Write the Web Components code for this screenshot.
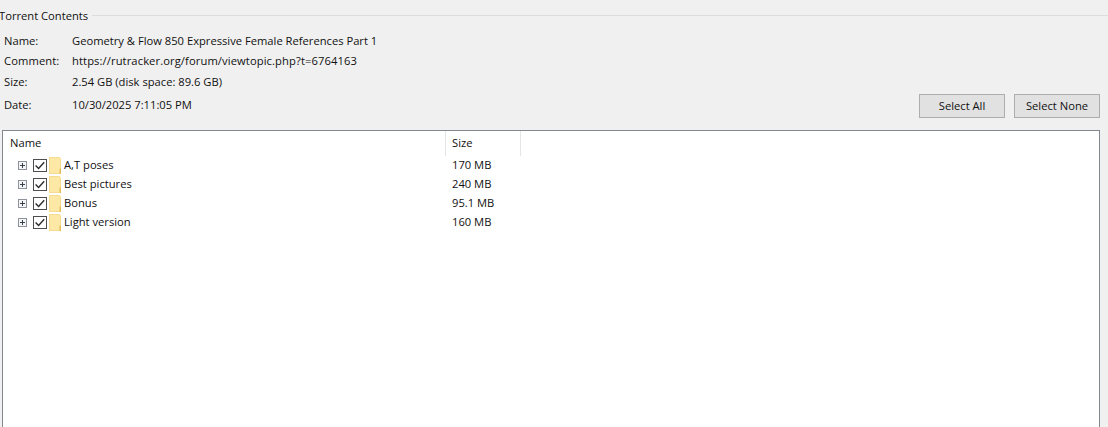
<!DOCTYPE html>
<html>
<head>
<meta charset="utf-8">
<title>Torrent Contents</title>
<style>
  html, body { margin: 0; height: 100%; overflow: hidden; background: #f0f0f0; }
  body { font: 12px "Open Sans", "Noto Sans", sans-serif; color: #111; }
</style>
</head>
<body>
<torrent-panel>
  <info-row slot="info" label="Name:" h="20">Geometry &amp; Flow 850 Expressive Female References Part 1</info-row>
  <info-row slot="info" label="Comment:" h="20" style="letter-spacing:.1px">https://rutracker.org/forum/viewtopic.php?t=6764163</info-row>
  <info-row slot="info" label="Size:" h="22">2.54 GB (disk space: 89.6 GB)</info-row>
  <info-row slot="info" label="Date:" h="25">10/30/2025 7:11:05 PM</info-row>
  <push-button slot="actions">Select All</push-button>
  <push-button slot="actions">Select None</push-button>
  <file-tree slot="tree">
    <file-row size="170 MB">A,T poses</file-row>
    <file-row size="240 MB">Best pictures</file-row>
    <file-row size="95.1 MB">Bonus</file-row>
    <file-row size="160 MB">Light version</file-row>
  </file-tree>
</torrent-panel>

<script>
"use strict";

const fontStack = '"Open Sans", "Noto Sans", sans-serif';

class TorrentPanel extends HTMLElement {
  constructor() {
    super();
    this.attachShadow({ mode: "open" }).innerHTML = `
      <style>
      :host { display: flex; flex-direction: column; height: 427px; box-sizing: border-box; overflow: hidden; font: 11.2px ${fontStack}; }
      .group { display: flex; align-items: center; gap: 4px; height: 30px; margin-left: -1px; }
      .group i { flex: 1; height: 1px; background: #dcdcdc; }
      .head { display: flex; align-items: flex-end; padding: 1px 8px 12px 4px; height: 100px; box-sizing: border-box; flex: none; }
      .info { flex: 1; display: flex; flex-direction: column; }
      .actions { display: flex; gap: 9px; }
      .tree { flex: 1; display: flex; margin: 0 8px 0 2px; min-height: 0; }
      </style>
      <div class="group"><span>Torrent Contents</span><i></i></div>
      <div class="head">
        <div class="info"><slot name="info"></slot></div>
        <div class="actions"><slot name="actions"></slot></div>
      </div>
      <div class="tree"><slot name="tree"></slot></div>`;
  }
}

class InfoRow extends HTMLElement {
  constructor() {
    super();
    this.attachShadow({ mode: "open" }).innerHTML = `
      <style>
      :host { display: flex; align-items: center; padding-bottom: 2px; box-sizing: border-box; }
      .label { width: 68px; }
      </style>
      <span class="label"></span><span><slot></slot></span>`;
  }
  connectedCallback() {
    this.shadowRoot.querySelector(".label").textContent = this.getAttribute("label");
    this.style.height = this.getAttribute("h") + "px";
  }
}

class PushButton extends HTMLElement {
  constructor() {
    super();
    this.attachShadow({ mode: "open" }).innerHTML = `
      <style>
      :host { display: flex; align-items: center; justify-content: center; width: 86px; height: 24px; box-sizing: border-box;
        background: #e1e1e1; border: 1px solid #adadad; padding-bottom: 2px; }
      </style>
      <slot></slot>`;
  }
}

class FileTree extends HTMLElement {
  constructor() {
    super();
    this.attachShadow({ mode: "open" }).innerHTML = `
      <style>
      :host { display: block; flex: 1; box-sizing: border-box; background: #fff; border: 1px solid #828790; border-bottom: 0; }
      .header { display: flex; height: 25px; }
      .header div { box-sizing: border-box; display: flex; align-items: center; padding: 0 0 2px 7px; border-right: 1px solid #e5e5e5; }
      .name { width: 443px; }
      .header .size { width: 75px; padding-left: 6px; }
      .rows { display: flex; flex-direction: column; }
      </style>
      <div class="header"><div class="name">Name</div><div class="size">Size</div></div>
      <div class="rows"><slot></slot></div>`;
  }
}

class FileRow extends HTMLElement {
  constructor() {
    super();
    this.attachShadow({ mode: "open" }).innerHTML = `
      <style>
      :host { display: flex; align-items: center; height: 19px; }
      .name { width: 443px; display: flex; align-items: center; box-sizing: border-box; padding-left: 15px; }
      .size { padding: 0 0 2px 6px; }
      .label { padding-bottom: 2px; }
      svg { display: block; flex: none; }
      .check { margin-left: 6px; }
      .folder { margin-left: 2px; margin-right: 2px; }
      </style>
      <div class="name">
        <svg width="9" height="9" viewBox="0 0 9 9" shape-rendering="crispEdges">
          <rect x=".5" y=".5" width="8" height="8" fill="#f4f5f7" stroke="#8d929c"/>
          <path d="M2 4.5h5M4.5 2v5" stroke="#3a3f4a" fill="none"/>
        </svg>
        <svg class="check" width="14" height="13" viewBox="0 0 14 13">
          <rect x=".5" y=".5" width="13" height="12" fill="#fff" stroke="#4d4d4d" shape-rendering="crispEdges"/>
          <path d="M2.6 6.4 5.6 9.4 11.2 3.2" fill="none" stroke="#2c2c2c" stroke-width="1.4"/>
        </svg>
        <svg class="folder" width="13" height="17" viewBox="0 0 13 17">
          <path d="M0 0h10.5l1.5 2v15H0z" fill="#fde8a6"/>
          <path d="M.5 .5h9.8l1.2 1.7V16.500H.5z" fill="none" stroke="#f6dc91"/>
          <path d="M12 11v6h-1.500v-5z" fill="#e4bf5c"/>
        </svg>
        <span class="label"><slot></slot></span>
      </div>
      <div class="size"></div>`;
  }
  connectedCallback() {
    this.shadowRoot.querySelector(".size").textContent = this.getAttribute("size");
  }
}

customElements.define("torrent-panel", TorrentPanel);
customElements.define("info-row", InfoRow);
customElements.define("push-button", PushButton);
customElements.define("file-tree", FileTree);
customElements.define("file-row", FileRow);
</script>
</body>
</html>
